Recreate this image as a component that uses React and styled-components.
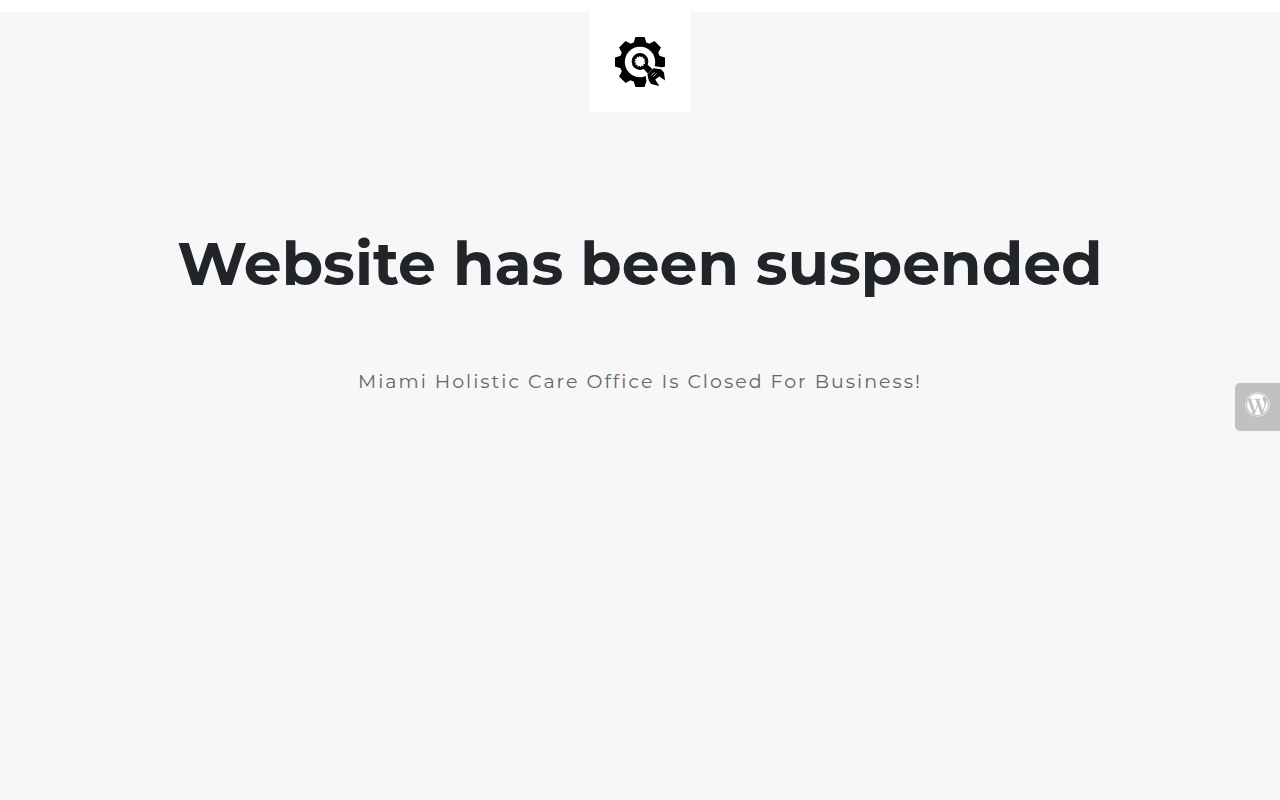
import React from "react";
import styled, { createGlobalStyle } from "styled-components";
import { FaWordpress } from "react-icons/fa";

const TEETH = [0, 45, 90, 180, 225, 270, 315];

const GearLogo = () => (
  <svg width="50" height="50" viewBox="0 0 50 50" role="img" aria-label="Maintenance">
    <circle cx="25" cy="25" r="20.5" />
    {TEETH.map((angle) => (
      <path
        key={angle}
        d="M18 8 L20.4 0 H29.6 L32 8 Z"
        transform={`rotate(${angle} 25 25)`}
      />
    ))}
    <circle cx="25" cy="25" r="15.2" fill="#fff" />
    {/* clears the corner where the wrench sits */}
    <path d="M30.5 38 L39 29 L50 31 V50 H32.5 L31.5 44 Z" fill="#fff" />
    <circle cx="25" cy="24.5" r="6.9" fill="none" stroke="#000" strokeWidth="3" />
    <circle cx="25" cy="24.5" r="5.2" fill="none" stroke="#000" strokeWidth="1.2" strokeDasharray="1.4 1.3" />
    <path d="M28.2 31.6 L32.2 27.6 L37.4 32 L33 36.8 Z" />
    {/* wrench head */}
    <path d="M32.4 37.6 L38.4 31.2 L46 32.2 L49 35.5 L50 43.4 L44.4 39.4 L40.2 42.4 L44.4 49 L36.2 47 L33.8 43.5 Z" />
    <path d="M36.4 38.4 L39.4 35.2 M38.4 39.6 L41.4 36.4" stroke="#fff" strokeWidth="0.8" />
  </svg>
);

const App = () => {
  return (
    <>
      <GlobalStyle />
      <TopBar />
      <Header>
        <LogoBox>
          <GearLogo />
        </LogoBox>
      </Header>
      <Content>
        <Title>Website has been suspended</Title>
        <Description>Miami Holistic Care Office Is Closed For Business!</Description>
      </Content>
      <LoginTab type="button" aria-label="WordPress">
        <FaWordpress size={25} />
      </LoginTab>
    </>
  );
};

const GlobalStyle = createGlobalStyle`
  * {
    box-sizing: border-box;
  }

  body {
    margin: 0;
    background-color: #f7f7f7;
    font-family: Montserrat, Inter, sans-serif;
  }
`;

const TopBar = styled.div`
  height: 12px;
  background-color: white;
`;

const Header = styled.header`
  display: flex;
  justify-content: center;
`;

const LogoBox = styled.div`
  display: flex;
  align-items: center;
  justify-content: center;
  width: 100px;
  height: 100px;
  background-color: white;
`;

const Content = styled.main`
  padding: 112px 16px 0;
  text-align: center;
`;

const Title = styled.h1`
  margin: 0;
  color: #212529;
  font-size: 60px;
  font-weight: 700;
  line-height: 80px;
`;

const Description = styled.p`
  margin: 64px 0 0;
  color: #666;
  font-size: 19px;
  font-weight: 400;
  line-height: 28px;
  letter-spacing: 2px;
`;

const LoginTab = styled.button`
  position: fixed;
  top: calc(50% - 17px);
  right: 0;
  display: flex;
  justify-content: center;
  width: 45px;
  height: 48px;
  padding: 9px 0 0;
  border: 0;
  border-radius: 5px 0 0 5px;
  background-color: #c1c1c1;
  color: white;
  cursor: pointer;
`;

export default App;
